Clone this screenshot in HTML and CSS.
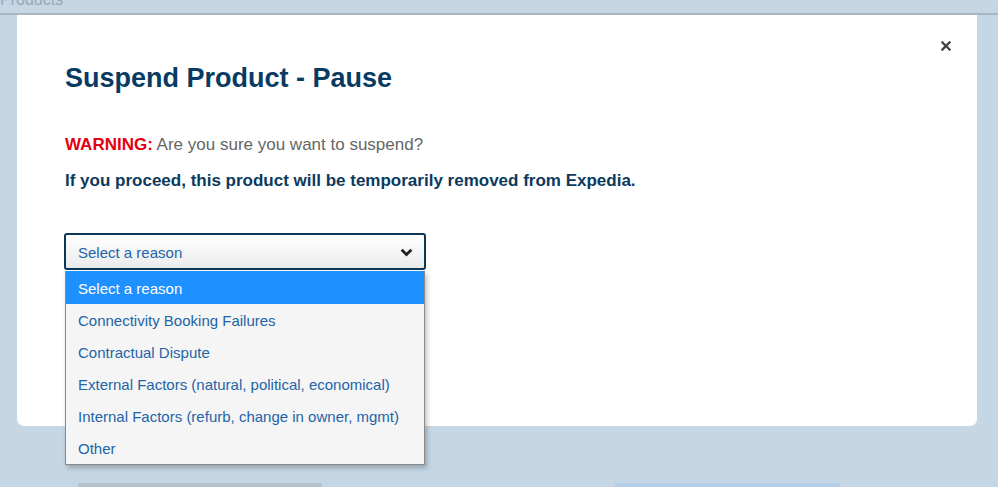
FILE: index.html
```html
<!DOCTYPE html>
<html>
<head>
<meta charset="utf-8">
<link rel="stylesheet" href="styles.css">
</head>
<body>
<div class="page">
  <div class="topbar"><span class="crumb">Products</span></div>
  <div class="modal">
    <button class="close" aria-label="Close">
      <svg width="10" height="10" viewBox="0 0 10 10"><path d="M1.5 1.5 L8.5 8.5 M8.5 1.5 L1.5 8.5" stroke="#444" stroke-width="2.4" stroke-linecap="square"/></svg>
    </button>
    <h1 class="title">Suspend Product - Pause</h1>
    <p class="warn"><span class="warn-label">WARNING:</span> Are you sure you want to suspend?</p>
    <p class="notice">If you proceed, this product will be temporarily removed from Expedia.</p>
    <div class="select-wrap">
      <div class="select">
        <span class="select-text">Select a reason</span>
        <svg class="chev" width="13" height="9" viewBox="0 0 13 9"><path d="M1.6 1.8 L6.5 6.5 L11.4 1.8" fill="none" stroke="#222" stroke-width="2.8"/></svg>
      </div>
      <ul class="menu">
        <li class="opt active">Select a reason</li>
        <li class="opt">Connectivity Booking Failures</li>
        <li class="opt">Contractual Dispute</li>
        <li class="opt">External Factors (natural, political, economical)</li>
        <li class="opt">Internal Factors (refurb, change in owner, mgmt)</li>
        <li class="opt">Other</li>
      </ul>
    </div>
  </div>
  <div class="bottom">
    <div class="strip strip-a"></div>
    <div class="strip strip-b"></div>
  </div>
</div>
</body>
</html>
```

FILE: styles.css
```css
* { box-sizing: border-box; }
html, body { margin: 0; padding: 0; }
body {
  width: 998px;
  height: 487px;
  overflow: hidden;
  background: #c5d7e5;
  font-family: "Liberation Sans", Arial, sans-serif;
}
.page {
  position: relative;
  height: 487px;
}
.topbar {
  height: 15px;
  border-bottom: 2px solid #a8b6c1;
  position: relative;
  overflow: hidden;
}
.crumb {
  position: absolute;
  left: 0;
  top: -9px;
  font-size: 16px;
  color: #98a8b6;
}
.modal {
  position: relative;
  margin: 0 21px 0 17px;
  height: 411px;
  background: #ffffff;
  border-radius: 0 0 7px 7px;
  padding: 47px 48px 0 48px;
}
.close {
  position: absolute;
  right: 24px;
  top: 24px;
  width: 14px;
  height: 14px;
  padding: 0;
  border: 0;
  background: transparent;
  display: flex;
  align-items: center;
  justify-content: center;
}
.title {
  margin: 0;
  font-size: 27px;
  line-height: 32px;
  font-weight: bold;
  color: #083b62;
}
.warn {
  margin: 41px 0 0 0;
  font-size: 17px;
  line-height: 20px;
  color: #666666;
}
.warn-label {
  color: #e3000f;
  font-weight: bold;
}
.notice {
  margin: 16px 0 0 0;
  font-size: 17px;
  line-height: 20px;
  font-weight: bold;
  color: #0c3a5e;
}
.select-wrap {
  position: relative;
  width: 362px;
  margin: 42px 0 0 -1px;
}
.select {
  height: 37px;
  border: 2px solid #0b3858;
  border-radius: 3px;
  background: linear-gradient(#ffffff, #ebebeb);
  display: flex;
  align-items: center;
  justify-content: space-between;
  padding: 1px 11px 0 12px;
}
.select-text {
  font-size: 15px;
  color: #1e64a8;
}
.chev { display: block; }
.menu {
  position: absolute;
  left: 1px;
  top: 38px;
  width: 360px;
  margin: 0;
  padding: 0;
  list-style: none;
  background: #f5f5f5;
  border: 1px solid #8a8a8a;
  border-top: 0;
  box-shadow: 2px 3px 5px rgba(0,0,0,0.25);
}
.opt {
  height: 32px;
  line-height: 34px;
  padding-left: 12px;
  font-size: 15px;
  color: #1e64a8;
}
.opt.active {
  background: #1e90ff;
  color: #ffffff;
  height: 33px;
  line-height: 35px;
}
.bottom {
  position: relative;
  height: 61px;
}
.strip {
  position: absolute;
  bottom: 0;
  height: 4px;
}
.strip-a { left: 78px; width: 244px; background: #b9c3cc; }
.strip-b { left: 615px; width: 225px; background: #b3cfe8; }
```
